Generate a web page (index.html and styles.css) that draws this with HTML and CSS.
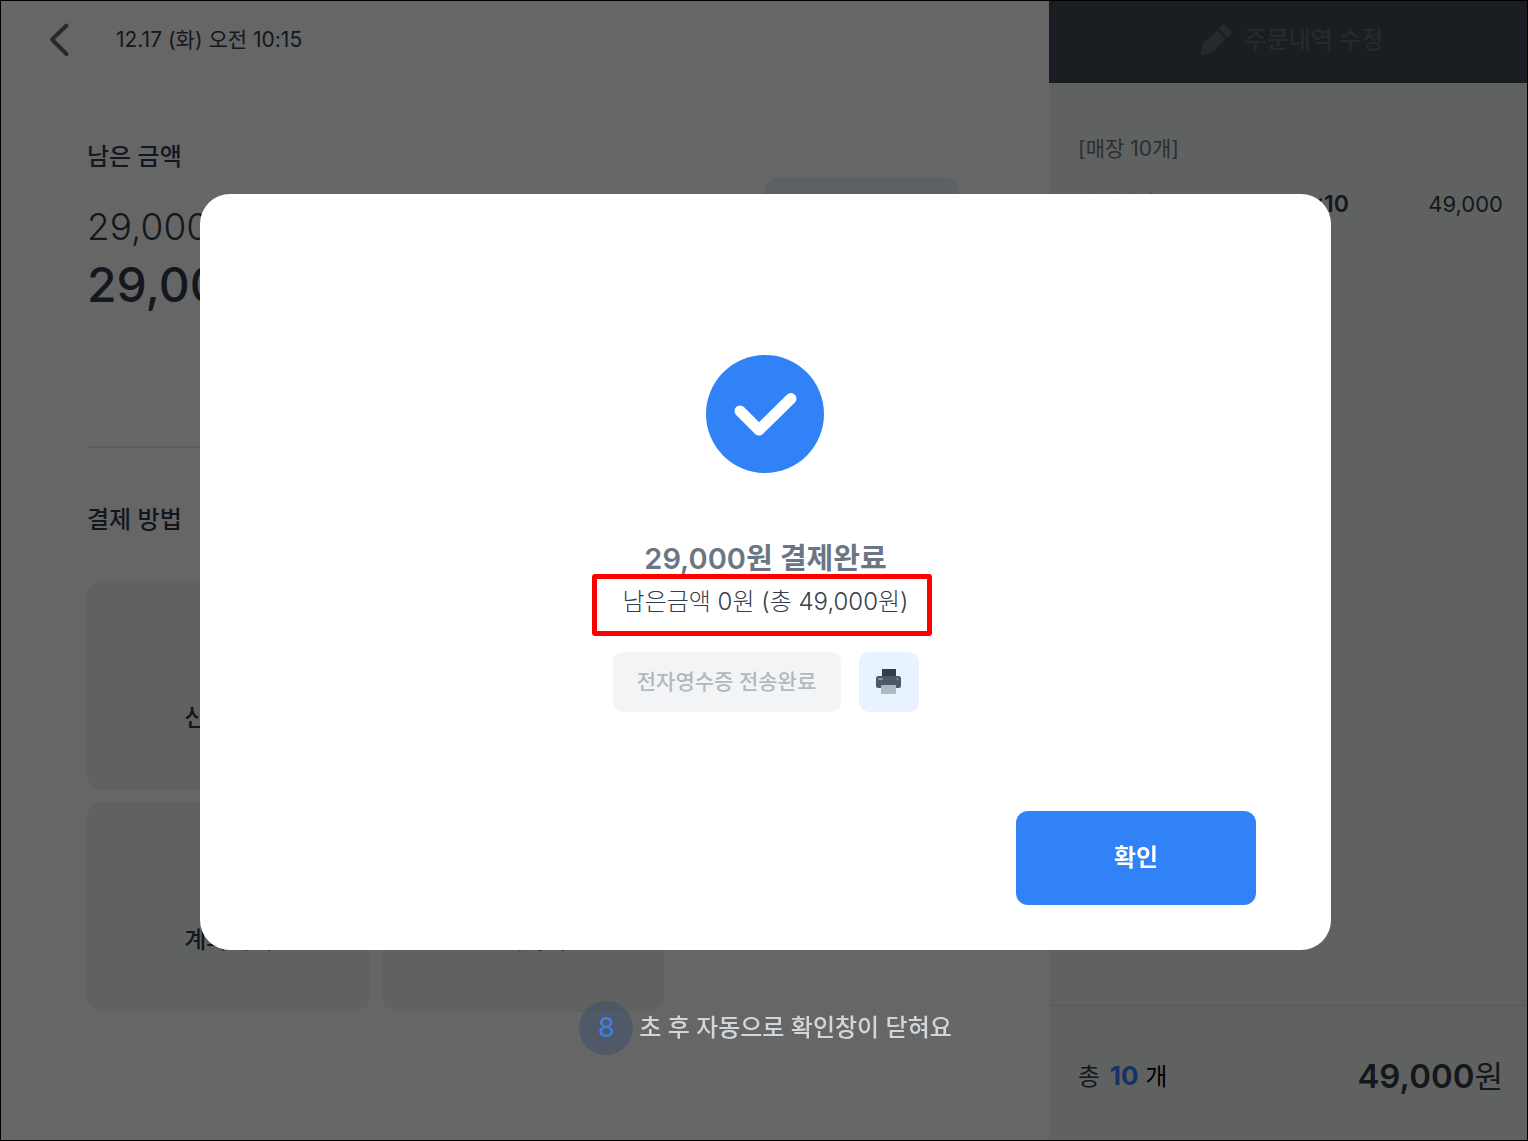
FILE: index.html
```html
<!DOCTYPE html>
<html lang="ko">
<head>
    <meta charset="UTF-8">
    <meta name="viewport" content="width=device-width, initial-scale=1.0">
    <title>결제완료</title>
    <link rel="stylesheet" href="styles.css">
</head>
<body>
    <div class="app">
        <main class="payment">
            <header class="topbar">
                <button class="back" aria-label="뒤로">
                    <svg width="22" height="36" viewBox="0 0 22 36" fill="none" stroke="currentColor" stroke-width="4" stroke-linecap="round" stroke-linejoin="round"><path d="M18.500 3.500 4 17.500 18.500 32"/></svg>
                </button>
                <time class="date">12.17 (화) 오전 10:15</time>
            </header>

            <h2 class="heading">남은 금액</h2>
            <div class="summary">
                <div class="amounts">
                    <div class="amount">29,000원</div>
                    <div class="amount-due">29,000원</div>
                </div>
                <button class="split-btn">금액 나누기</button>
            </div>

            <h2 class="heading methods-heading">결제 방법</h2>
            <div class="methods">
                <button class="method">
                    <svg width="48" height="48" viewBox="0 0 48 48"><rect x="4" y="10" width="40" height="28" rx="4" fill="#3182f6"/><path d="M4 18h40v6H4z" fill="#333d4b"/></svg>
                    <span>신용카드</span>
                </button>
                <button class="method">
                    <svg width="48" height="48" viewBox="0 0 48 48"><rect x="4" y="12" width="40" height="24" rx="3" fill="#6bc48f"/><circle cx="24" cy="24" r="6" fill="#fff"/></svg>
                    <span>현금결제</span>
                </button>
                <button class="method">
                    <svg width="48" height="48" viewBox="0 0 48 48"><rect x="13" y="4" width="22" height="40" rx="4" fill="#4e5968"/></svg>
                    <span>간편결제</span>
                </button>
                <button class="method">
                    <svg width="48" height="48" viewBox="0 0 48 48"><path d="M6 16h30l-8-8M42 32H12l8 8" fill="none" stroke="#3182f6" stroke-width="4"/></svg>
                    <span>계좌이체</span>
                </button>
                <button class="method">
                    <svg width="48" height="48" viewBox="0 0 48 48"><path d="M6 8h36v26H22l-10 8v-8H6z" fill="#8b95a1"/></svg>
                    <span>전체하기</span>
                </button>
            </div>
        </main>

        <aside class="order">
            <button class="edit-btn">
                <svg width="34" height="34" viewBox="0 0 34 34" fill="currentColor"><path d="M1 33 4 20.500 18.500 7.500 26.500 16 13 29.500Z"/><path d="M20 5.500 23.500 2Q24.500 1 25.500 2L32.500 9Q33.500 10 32.500 11L28.500 14.500Z"/></svg>
                주문내역 수정
            </button>
            <div class="order-body">
                <p class="order-group">[매장 10개]</p>
                <div class="order-item">
                    <span class="name">아메리카노</span>
                    <b>×10</b>
                    <span class="price">49,000</span>
                </div>
            </div>
            <footer class="order-total">
                <p class="count">총 <b>10</b> <span>개</span></p>
                <p class="total"><b>49,000</b>원</p>
            </footer>
        </aside>
    </div>

    <div class="overlay">
        <div class="modal" role="dialog" aria-modal="true" aria-labelledby="modalTitle">
            <svg class="check" width="120" height="119" viewBox="0 0 120 119"><circle cx="59" cy="59" r="59" fill="#3182f6"/><path d="M34 56 53 75 85 43.500" fill="none" stroke="#fff" stroke-width="11" stroke-linecap="round" stroke-linejoin="round"/></svg>
            <h1 class="modal-title" id="modalTitle">29,000원 결제완료</h1>
            <p class="modal-sub">남은금액 0원 (총 49,000원)</p>
            <div class="receipt">
                <button class="receipt-btn" disabled>전자영수증 전송완료</button>
                <button class="print-btn" aria-label="영수증 출력">
                    <svg width="26" height="26" viewBox="0 0 26 26"><rect x="6" y="0" width="14" height="9" fill="#333d4b"/><rect x="0" y="7" width="25" height="12" rx="2.500" fill="#4e5968"/><rect x="2" y="9" width="5" height="2" rx="1" fill="#8b95a1"/><rect x="20.500" y="9" width="2" height="2" rx="1" fill="#8b95a1"/><rect x="5" y="16" width="15" height="9" rx="1" fill="#b0b8c1"/></svg>
                </button>
            </div>
            <button class="confirm-btn">확인</button>
        </div>
        <p class="countdown"><span class="seconds">8</span>초 후 자동으로 확인창이 닫혀요</p>
    </div>
</body>
</html>
```
FILE: styles.css
```css
* { margin: 0; padding: 0; box-sizing: border-box; }
body {
    font-family: Inter, "Noto Sans CJK KR", sans-serif;
    font-size: 24px;
    line-height: 36px;
    color: #333d4b;
    background: #fff;
}
button {
    font: inherit;
    color: inherit;
    border: none;
    background: none;
    cursor: pointer;
}
svg { display: block; }

.app {
    display: flex;
    min-height: 100vh;
    border: 1px solid #000;
}

/* left side */
.payment { flex: 1; padding: 0 90px 0 86px; }
.topbar {
    display: flex;
    align-items: center;
    gap: 46px;
    height: 78px;
    margin: 0 0 60px -39px;
}
.back { color: #5f6673; }
.date { font-size: 21px; font-weight: 400; }
.heading { font-size: 24px; font-weight: 500; }
.summary {
    display: flex;
    justify-content: space-between;
    align-items: flex-start;
    padding: 2px 0 131px;
    border-bottom: 2px solid #e5e8eb;
}
.amounts { padding-top: 22px; }
.amount { font-size: 37px; font-weight: 300; line-height: 56px; }
.amount-due { font-size: 48px; font-weight: 500; line-height: 60px; }
.split-btn {
    width: 195px;
    height: 64px;
    border-radius: 16px;
    background: #e8f3ff;
    color: #3182f6;
}
.methods-heading { margin: 54px 0 42px; }
.methods {
    display: grid;
    grid-template-columns: repeat(3, 1fr);
    gap: 12px;
}
.method {
    display: flex;
    flex-direction: column;
    align-items: center;
    justify-content: center;
    gap: 18px;
    height: 210px;
    border-radius: 16px;
    background: #f0f5f2;
    font-weight: 500;
}

/* order list */
.order {
    display: flex;
    flex-direction: column;
    width: 478px;
    background: #f0f5f2;
}
.edit-btn {
    display: flex;
    align-items: center;
    justify-content: center;
    gap: 12px;
    height: 82px;
    padding: 0 0 4px 6px;
    background: #414d57;
    color: #5f6673;
    font-weight: 500;
}
.order-body { flex: 1; padding: 48px 24px 0 29px; }
.order-group { font-size: 21px; color: #6b7684; }
.order-item {
    display: grid;
    grid-template-columns: 1fr auto 154px;
    margin-top: 19px;
    font-size: 23px;
}
.order-item b { font-weight: 600; }
.name { font-size: 21px; }
.price { font-size: 22px; text-align: right; }
.order-total {
    display: flex;
    align-items: center;
    justify-content: space-between;
    height: 135px;
    padding: 6px 24px 0 29px;
    border-top: 1px solid #d9dde0;
}
.count b { margin-left: 3px; font-size: 26px; color: #3182f6; }
.count span { color: #000; }
.total { font-size: 31px; }
.total b { font-size: 33px; font-weight: 600; }

/* payment done dialog */
.overlay {
    position: fixed;
    inset: 0;
    padding: 194px 197px 0 200px;
    background: rgba(0, 0, 0, 0.6);
}
.modal {
    display: flex;
    flex-direction: column;
    align-items: center;
    padding: 161px 75px 45px;
    border-radius: 30px;
    background: #fff;
}
.modal-title {
    margin-top: 62px;
    font-size: 29px;
    font-weight: 600;
    line-height: 46px;
    color: #6b7684;
}
.modal-sub {
    position: relative;
    font-size: 24px;
    font-weight: 300;
    line-height: 40px;
}
.modal-sub::after {
    content: "";
    position: absolute;
    inset: -8px -24px -14px -31px;
    border: 5px solid #f00;
    border-radius: 3px;
}
.receipt { display: flex; gap: 18px; margin-top: 30px; }
.receipt-btn {
    width: 228px;
    height: 60px;
    border-radius: 10px;
    background: #f2f4f6;
    color: #b0b8c1;
    font-size: 21px;
    font-weight: 500;
}
.print-btn {
    display: flex;
    align-items: center;
    justify-content: center;
    width: 60px;
    border-radius: 10px;
    background: #e8f3ff;
}
.confirm-btn {
    align-self: flex-end;
    width: 240px;
    height: 94px;
    margin-top: 99px;
    border-radius: 12px;
    background: #3182f6;
    color: #fff;
    font-weight: 600;
}
.countdown {
    display: flex;
    align-items: center;
    justify-content: center;
    gap: 6px;
    margin-top: 51px;
    color: #d1d6db;
    font-weight: 500;
}
.seconds {
    width: 54px;
    border-radius: 50%;
    background: rgba(70, 84, 106, 0.7);
    color: #3f7fdc;
    font-size: 27px;
    line-height: 54px;
    text-align: center;
}
```
